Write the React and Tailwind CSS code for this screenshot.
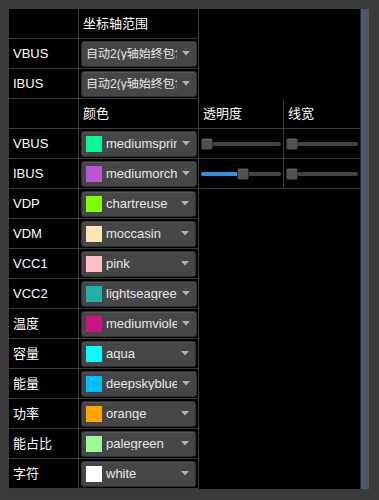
import React from "react";

const font = { fontFamily: '"Liberation Sans", "Noto Sans CJK SC", sans-serif' };

function Combo({ color, text, small }) {
  return (
    <div className="mx-[2px] h-[26px] w-[116px] rounded-[3px] border border-[#2e2e2e] bg-[#464646] flex items-center pl-[4px] pr-[6px] shadow-[inset_0_1px_0_#555]">
      {color && <div className="w-[16px] h-[16px] shrink-0 mr-[4px]" style={{ background: color }} />}
      <div className={`flex-1 overflow-hidden whitespace-nowrap ${small ? "text-[12px]" : "text-[13px]"} text-[#e6e6e6] leading-none`}>{text}</div>
      <svg width="8" height="5" viewBox="0 0 8 5" className="shrink-0 ml-[5px]">
        <path d="M0 0 L8 0 L4 4.5 Z" fill="#b0b0b0" />
      </svg>
    </div>
  );
}

function Slider({ pos, fill }) {
  return (
    <div className="relative h-[14px] mx-[2px] w-full">
      <div className="absolute left-0 right-0 top-[5px] h-[4px] rounded-full bg-[#444444]" />
      {fill && <div className="absolute left-0 top-[5px] h-[4px] rounded-l-full bg-[#2f8ee6]" style={{ width: pos + 2 }} />}
      <div className="absolute top-[1px] w-[12px] h-[12px] rounded-[2px] bg-[#515151] border border-[#2a2a2a] shadow-[inset_0_1px_0_#666]" style={{ left: pos }} />
    </div>
  );
}

const line = "border-[#3a3a3a]";

function Row({ label, c2, c3, c4, full }) {
  return (
    <div className="flex h-[30px]">
      <div className={`w-[70px] shrink-0 border-r border-b ${line} flex items-center pl-[4px] text-[13px] text-white`}>{label}</div>
      <div className={`w-[120px] shrink-0 border-r border-b ${line} flex items-center`}>{c2}</div>
      {full ? (
        <>
          <div className={`w-[85px] shrink-0 border-r border-b ${line} flex items-center`}>{c3}</div>
          <div className={`flex-1 border-b ${line} flex items-center`}>{c4}</div>
        </>
      ) : (
        <div className="flex-1" />
      )}
    </div>
  );
}

const colors = [
  ["VDP", "#7fff00", "chartreuse"],
  ["VDM", "#ffe4b5", "moccasin"],
  ["VCC1", "#ffc0cb", "pink"],
  ["VCC2", "#20b2aa", "lightseagreen"],
  ["温度", "#c71585", "mediumviolet"],
  ["容量", "#00ffff", "aqua"],
  ["能量", "#00bfff", "deepskyblue"],
  ["功率", "#ffa500", "orange"],
  ["能占比", "#98fb98", "palegreen"],
  ["字符", "#ffffff", "white"],
];

export default function App() {
  return (
    <div className="w-[379px] h-[500px] bg-[#3b3b3b] pt-[9px] pl-[9px]" style={font}>
      <div className="flex">
        <div className="w-[351px] h-[480px] bg-black overflow-hidden">
          <Row label="" c2={<span className="pl-[4px] text-[13px] text-white">坐标轴范围</span>} />
          <Row label="VBUS" c2={<Combo small text="自动2(y轴始终包含所有" />} />
          <Row label="IBUS" c2={<Combo small text="自动2(y轴始终包含所有" />} />
          <Row
            label=""
            full
            c2={<span className="pl-[4px] text-[13px] text-white">颜色</span>}
            c3={<span className="pl-[4px] text-[13px] text-white">透明度</span>}
            c4={<span className="pl-[4px] text-[13px] text-white">线宽</span>}
          />
          <Row label="VBUS" full c2={<Combo color="#00fa9a" text="mediumspringgreen" />} c3={<Slider pos={0} />} c4={<Slider pos={0} />} />
          <Row label="IBUS" full c2={<Combo color="#ba55d3" text="mediumorchid" />} c3={<Slider pos={36} fill />} c4={<Slider pos={0} />} />
          {colors.map(([l, c, t]) => (
            <Row key={l} label={l} c2={<Combo color={c} text={t} />} />
          ))}
        </div>
        <div className="w-[9px] h-[480px] bg-[#4f5869] border-l border-[#2c2c2c]" />
      </div>
    </div>
  );
}
